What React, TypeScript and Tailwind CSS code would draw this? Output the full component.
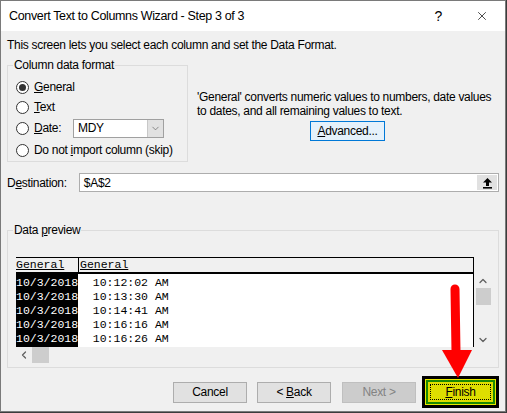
import { X, ChevronDown, ChevronUp, ChevronLeft } from "lucide-react";

const rows = ["10:12:02 AM", "10:13:30 AM", "10:14:41 AM", "10:16:16 AM", "10:16:26 AM"];

const Radio = ({ checked }: { checked?: boolean }) => (
  <span className="flex h-[13px] w-[13px] items-center justify-center rounded-full border border-[#333] bg-white">
    {checked && <span className="h-[7px] w-[7px] rounded-full bg-[#333]" />}
  </span>
);

const Btn = ({ children, disabled }: { children: React.ReactNode; disabled?: boolean }) => (
  <div
    className={
      "flex h-[21px] w-[74px] items-center justify-center border " +
      (disabled ? "border-[#bfbfbf] bg-[#cccccc] text-[#838383]" : "border-[#adadad] bg-[#e1e1e1] text-black")
    }
  >
    {children}
  </div>
);

export default function App() {
  return (
    <div className="relative h-[413px] w-[507px] overflow-hidden bg-[#3c3c3c] font-['Liberation_Sans',sans-serif] text-[12px] tracking-[-0.3px] text-black">
      <div className="flex h-[412px] w-[506px] flex-col border border-[#7a7a7a] bg-[#f0f0f0]">
        {/* title bar */}
        <div className="flex h-[30px] items-center bg-white pl-[8px]">
          <span className="text-[12.5px] tracking-[-0.35px]">Convert Text to Columns Wizard - Step 3 of 3</span>
          <span className="ml-auto text-[14px]">?</span>
          <X className="ml-[33px] mr-[16px]" size={14} strokeWidth={1.2} />
        </div>

        <div className="flex flex-col px-[6px]">
          <div className="mt-[7px] whitespace-nowrap leading-[15px]">This screen lets you select each column and set the Data Format.</div>

          <div className="mt-[5px] flex">
            <fieldset className="h-[104px] w-[181px] shrink-0 border border-[#dcdcdc] pl-[8px]">
              <legend className="-ml-[3px] px-[1px] leading-[14px]">Column data format</legend>
              <div className="pt-[5px]">
                <div className="flex h-[20px] items-center gap-[5px]">
                  <Radio checked />
                  <span><u>G</u>eneral</span>
                </div>
                <div className="flex h-[20px] items-center gap-[5px]">
                  <Radio />
                  <span><u>T</u>ext</span>
                </div>
                <div className="flex h-[22px] items-center gap-[5px]">
                  <Radio />
                  <span className="w-[34px]"><u>D</u>ate:</span>
                  <div className="flex h-[19px] w-[91px] items-center border border-[#a0a0a0] bg-white">
                    <span className="pl-[4px]">MDY</span>
                    <div className="ml-auto flex h-full w-[16px] items-center justify-center border-l border-[#c8c8c8] bg-[#e1e1e1]">
                      <ChevronDown size={11} strokeWidth={1.5} className="text-[#606060]" />
                    </div>
                  </div>
                </div>
                <div className="flex h-[22px] items-center gap-[5px]">
                  <Radio />
                  <span className="whitespace-nowrap">Do not <u>i</u>mport column (skip)</span>
                </div>
              </div>
            </fieldset>

            <div className="ml-[9px] mt-[32px] flex flex-col">
              <div className="whitespace-nowrap leading-[14px]">
                'General' converts numeric values to numbers, date values
                <br />
                to dates, and all remaining values to text.
              </div>
              <div className="ml-[113px] mt-[3px] flex h-[20px] w-[75px] items-center justify-center border border-[#0078d7] bg-[#e5f1fb]">
                <span><u>A</u>dvanced...</span>
              </div>
            </div>
          </div>

          <div className="mt-[11px] flex items-center">
            <span className="w-[72px]">D<u>e</u>stination:</span>
            <div className="flex h-[19px] w-[421px] items-center border border-[#adadad] bg-white">
              <span className="pl-[4px]">$A$2</span>
              <div className="ml-auto mr-[1px] flex h-[15px] w-[20px] items-center justify-center bg-[#e1e1e1]">
                <svg width="11" height="12" viewBox="0 0 11 12">
                  <path d="M5.5 1 L10 5.5 H7 V9 H4 V5.5 H1 Z" fill="#000" />
                  <rect x="1" y="10" width="9" height="1.6" fill="#000" />
                </svg>
              </div>
            </div>
          </div>

          <fieldset className="mt-[31px] w-[492px] border border-[#dcdcdc] pb-[4px] pl-[8px]">
            <legend className="-ml-[3px] px-[1px] leading-[14px]">
              Data <u>p</u>review
            </legend>
            <div className="flex pt-[20px]">
              <div className="flex flex-col">
                <div className="flex h-[90px] w-[458px] flex-col border-r border-t border-black bg-white font-['Liberation_Mono',monospace] text-[11.5px] tracking-normal">
                  <div className="flex h-[16px] border-b-2 border-black bg-[#f0f0f0] leading-[14px]">
                    <span className="w-[63px] border-r border-black"><u>General</u></span>
                    <span className="pl-[1px]"><u>General</u></span>
                  </div>
                  <div className="flex flex-1">
                    <div className="flex w-[62px] flex-col bg-black pt-[2px] text-white">
                      {rows.map((_, i) => (
                        <div key={i} className="h-[14px] leading-[14px]">10/3/2018</div>
                      ))}
                    </div>
                    <div className="ml-[1px] flex flex-col pt-[2px]">
                      {rows.map((r) => (
                        <div key={r} className="h-[14px] whitespace-pre leading-[14px]">{"  " + r}</div>
                      ))}
                    </div>
                  </div>
                </div>
                <div className="flex h-[16px] items-center">
                  <div className="flex w-[16px] justify-center">
                    <ChevronLeft size={12} strokeWidth={2.5} className="text-[#606060]" />
                  </div>
                  <div className="h-full w-[17px] bg-[#cdcdcd]" />
                </div>
              </div>
              <div className="ml-[1px] mt-[16px] flex h-[74px] w-[16px] flex-col items-center">
                <div className="flex h-[15px] items-center">
                  <ChevronUp size={12} strokeWidth={2.5} className="text-[#606060]" />
                </div>
                <div className="h-[17px] w-[15px] bg-[#cdcdcd]" />
                <div className="mt-auto flex h-[15px] items-center">
                  <ChevronDown size={12} strokeWidth={2.5} className="text-[#606060]" />
                </div>
              </div>
            </div>
          </fieldset>

          <div className="mt-[8px] flex items-center">
            <div className="ml-[166px]">
              <Btn>Cancel</Btn>
            </div>
            <div className="ml-[10px]">
              <Btn>
                &lt; <u className="ml-[3px]">B</u>ack
              </Btn>
            </div>
            <div className="ml-[11px]">
              <Btn disabled>Next &gt;</Btn>
            </div>
            <div className="ml-[6px] flex h-[32px] w-[84px] bg-black p-[3px]">
              <div className="flex flex-1 border border-[#e8e800]">
                <div className="flex flex-1 border-2 border-[#1a8a00]">
                  <div className="flex flex-1 bg-[#dede00] p-[2px]">
                    <div className="flex flex-1 items-center justify-center border border-dotted border-black">
                      <span><u>F</u>inish</span>
                    </div>
                  </div>
                </div>
              </div>
            </div>
          </div>
        </div>
      </div>

      {/* red annotation arrow */}
      <svg className="absolute left-[436px] top-[280px]" width="44" height="100" viewBox="0 0 44 100">
        <line x1="19" y1="9" x2="20" y2="72" stroke="#ff0000" strokeWidth="9" strokeLinecap="round" />
        <polygon points="6,70 36,70 22,98" fill="#ff0000" />
      </svg>
    </div>
  );
}
